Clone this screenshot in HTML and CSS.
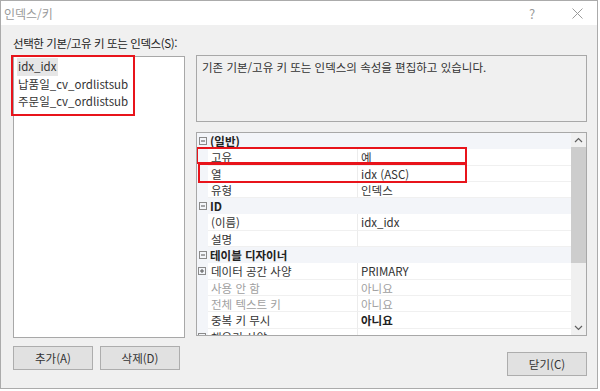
FILE: index.html
```html
<!DOCTYPE html>
<html lang="ko">
<head>
  <meta charset="UTF-8"/>
  <title>인덱스/키</title>
  <link rel="stylesheet" href="styles.css">
</head>
<body>
  <div class="window">
    <div class="titlebar">
      <span class="title">인덱스/키</span>
      <span class="help">?</span>
      <span class="close-x">
        <svg width="11" height="11" viewBox="0 0 11 11"><path d="M0.5 0.5 L10.5 10.5 M10.5 0.5 L0.5 10.5" stroke="#9a9a9a" stroke-width="1" fill="none"/></svg>
      </span>
    </div>

    <div class="dialog">
      <div class="caption">선택한 기본/고유 키 또는 인덱스(S):</div>

      <div class="left">
        <div class="listbox">
          <div class="item selected">idx_idx</div>
          <div class="item">납품일_cv_ordlistsub</div>
          <div class="item">주문일_cv_ordlistsub</div>
          <div class="mark mark-list"></div>
        </div>
        <div class="btn-row">
          <button class="btn">추가(A)</button>
          <button class="btn">삭제(D)</button>
        </div>
      </div>

      <div class="right">
        <div class="desc">기존 기본/고유 키 또는 인덱스의 속성을 편집하고 있습니다.</div>

        <div class="propgrid">
          <div class="rows">
            <div class="row cat"><span class="exp"><svg width="8" height="8" viewBox="0 0 8 8"><rect x="0.5" y="0.5" width="7" height="7" fill="none" stroke="#8a8a8a"/><path d="M2 4 H6" stroke="#555"/></svg></span>(일반)</div>
            <div class="row"><span class="name">고유</span><span class="val">예</span></div>
            <div class="row"><span class="name">열</span><span class="val">idx (ASC)</span></div>
            <div class="row"><span class="name">유형</span><span class="val">인덱스</span></div>
            <div class="row cat"><span class="exp"><svg width="8" height="8" viewBox="0 0 8 8"><rect x="0.5" y="0.5" width="7" height="7" fill="none" stroke="#8a8a8a"/><path d="M2 4 H6" stroke="#555"/></svg></span>ID</div>
            <div class="row"><span class="name">(이름)</span><span class="val">idx_idx</span></div>
            <div class="row"><span class="name">설명</span><span class="val"></span></div>
            <div class="row cat"><span class="exp"><svg width="8" height="8" viewBox="0 0 8 8"><rect x="0.5" y="0.5" width="7" height="7" fill="none" stroke="#8a8a8a"/><path d="M2 4 H6" stroke="#555"/></svg></span>테이블 디자이너</div>
            <div class="row"><span class="name"><span class="sub-exp"><svg width="8" height="8" viewBox="0 0 8 8"><rect x="0.5" y="0.5" width="7" height="7" fill="none" stroke="#8a8a8a"/><path d="M2 4 H6 M4 2 V6" stroke="#555"/></svg></span>데이터 공간 사양</span><span class="val">PRIMARY</span></div>
            <div class="row off"><span class="name">사용 안 함</span><span class="val">아니요</span></div>
            <div class="row off"><span class="name">전체 텍스트 키</span><span class="val">아니요</span></div>
            <div class="row"><span class="name">중복 키 무시</span><span class="val strong">아니요</span></div>
            <div class="row"><span class="name"><span class="sub-exp"><svg width="8" height="8" viewBox="0 0 8 8"><rect x="0.5" y="0.5" width="7" height="7" fill="none" stroke="#8a8a8a"/><path d="M2 4 H6 M4 2 V6" stroke="#555"/></svg></span>채우기 사양</span><span class="val"></span></div>
            <div class="mark mark-unique"></div>
            <div class="mark mark-col"></div>
          </div>
          <div class="scrollbar">
            <div class="arrow"><svg width="9" height="6" viewBox="0 0 9 6"><path d="M1 5 L4.5 1.5 L8 5" stroke="#606060" stroke-width="1.2" fill="none"/></svg></div>
            <div class="thumb"></div>
            <div class="track"></div>
            <div class="arrow"><svg width="9" height="6" viewBox="0 0 9 6"><path d="M1 1 L4.5 4.5 L8 1" stroke="#606060" stroke-width="1.2" fill="none"/></svg></div>
          </div>
        </div>

        <div class="foot">
          <button class="btn">닫기(C)</button>
        </div>
      </div>
    </div>
  </div>
</body>
</html>
```

FILE: styles.css
```css
/* Page */
body {
  margin:0; padding:0;
  background:#fff;
  font-family:"Noto Sans CJK KR","Noto Sans",sans-serif;
  font-size:11.5px; color:#333;
}

/* Window frame */
.window {
  box-sizing:border-box;
  width:598px; height:389px;
  border:1px solid #ababab;
  background:#f0f0f0;
  display:flex; flex-direction:column;
}
.titlebar {
  height:24px; flex:none;
  background:#fff;
  display:flex; align-items:center;
  padding-left:3px;
}
.title { color:#9a9a9a; font-size:12px; flex:1; }
.help { color:#9a9a9a; font-size:13px; width:12px; margin-right:31px; }
.close-x { width:11px; margin-right:14px; display:flex; }

/* Dialog body */
.dialog {
  flex:1;
  display:grid;
  grid-template-columns:173px 391px;
  grid-template-rows:auto 1fr;
  column-gap:11px;
  padding:10px 0 0 11px;
}
.caption {
  grid-column:1 / 3;
  line-height:16px; height:16px;
  margin:0 0 4px 1px;
  letter-spacing:-0.4px;
  color:#222;
}

/* Left: list */
.left { display:flex; flex-direction:column; }
.listbox {
  position:relative;
  box-sizing:border-box;
  margin:1px 0 0 1px;
  width:172px; height:282px;
  background:#fff;
  border:1px solid #a8a8a8;
  padding:1px 0 0 3px;
}
.item {
  display:table;
  height:17.5px; line-height:17.5px;
  padding:0 2px 0 1px;
  color:#333;
}
.item.selected { background:#e6e6e6; }

.mark {
  position:absolute;
  box-sizing:border-box;
  border:2px solid #e8141b;
}
.mark-list { left:-3px; top:-2px; width:124px; height:61px; }

.btn-row { display:flex; gap:7px; margin:8px 0 0 1px; }
.btn {
  box-sizing:border-box;
  width:80px; height:24px;
  background:#e1e1e1;
  border:1px solid #adadad;
  font-family:inherit; font-size:11.5px; color:#333;
  padding:0;
}

/* Right: description + property grid */
.right { display:flex; flex-direction:column; }
.desc {
  box-sizing:border-box;
  height:67px;
  border:1px solid #a8a8a8;
  background:#f0f0f0;
  padding:3px 5px;
  line-height:16px;
  color:#333;
}
.propgrid {
  box-sizing:border-box;
  margin-top:10px;
  height:204px;
  border:1px solid #a8a8a8;
  background:#fff;
  display:flex;
}
.rows {
  position:relative;
  flex:1;
  overflow:hidden;
}
.row {
  display:flex;
  height:16.3px; line-height:16px;
  background:#f3f5f9;
  color:#333;
}
.row.cat {
  font-weight:bold; color:#222;
  align-items:center;
}
.exp { width:13px; display:flex; padding-left:2px; box-sizing:border-box; }
.exp svg, .sub-exp svg { display:block; }
.name {
  position:relative;
  box-sizing:border-box;
  margin-left:11px;
  width:150px;
  padding-left:3px;
  background:#fff;
  border-right:1px solid #ececec;
  border-bottom:1px solid #f0f0f0;
  white-space:nowrap;
}
.sub-exp {
  position:absolute;
  left:-10px; top:4px;
}
.val {
  flex:1;
  padding-left:3px;
  background:#fff;
  border-bottom:1px solid #f0f0f0;
}
.row.off { color:#a0a0a0; }
.val.strong { font-weight:bold; color:#222; }

.mark-unique { left:-1px; top:14px; width:271px; height:17px; }
.mark-col { left:1px; top:30px; width:269px; height:20px; }

.scrollbar {
  width:15px; flex:none;
  background:#f0f0f0;
  display:flex; flex-direction:column;
}
.arrow {
  height:14px;
  display:flex; align-items:center; justify-content:center;
}
.thumb { height:116px; background:#cdcdcd; }
.track { flex:1; }

.foot {
  display:flex; justify-content:flex-end;
  margin-top:16px;
}
```
